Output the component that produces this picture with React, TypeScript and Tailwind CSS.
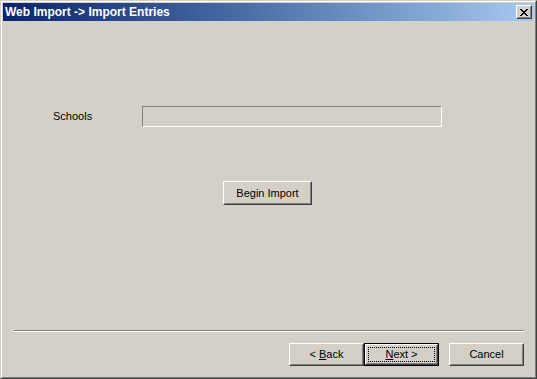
import type { ReactNode } from "react"

const font = { fontFamily: '"Liberation Sans", Arial, sans-serif' }

// pixel pattern for the classic close glyph
const closeRows = [
  "11000011",
  "01100110",
  "00111100",
  "00011000",
  "00111100",
  "01100110",
  "11000011",
]

function Button({
  children,
  isDefault = false,
  className = "",
}: {
  children: ReactNode
  isDefault?: boolean
  className?: string
}) {
  if (isDefault) {
    return (
      <div className={`border border-black ${className}`}>
        <div className="h-full border border-t-white border-l-white border-r-[#404040] border-b-[#404040]">
          <div className="flex h-full items-center justify-center border border-t-[#d4d0c8] border-l-[#d4d0c8] border-r-[#808080] border-b-[#808080] p-px">
            <div className="flex h-full w-full items-center justify-center border border-dotted border-black text-[11px] text-black">
              {children}
            </div>
          </div>
        </div>
      </div>
    )
  }
  return (
    <div
      className={`border border-t-white border-l-white border-r-[#404040] border-b-[#404040] ${className}`}
    >
      <div className="flex h-full items-center justify-center border border-t-[#d4d0c8] border-l-[#d4d0c8] border-r-[#808080] border-b-[#808080] text-[11px] text-black">
        {children}
      </div>
    </div>
  )
}

export default function App() {
  return (
    <div
      className="h-[379px] w-[537px] border border-t-[#d4d0c8] border-l-[#d4d0c8] border-r-[#404040] border-b-[#404040] bg-[#d4d0c8]"
      style={font}
    >
      <div className="flex h-full flex-col border border-t-white border-l-white border-r-[#808080] border-b-[#808080] p-px">
        {/* title bar */}
        <div className="flex h-[18px] shrink-0 items-center justify-between bg-gradient-to-r from-[#0a246a] to-[#a6caf0] pl-[2px] pr-[2px]">
          <span className="text-[12px] font-bold leading-none text-white">
            Web Import -&gt; Import Entries
          </span>
          <div className="h-[14px] w-[16px] border border-t-white border-l-white border-r-[#404040] border-b-[#404040] bg-[#d4d0c8]">
            <div className="flex h-full items-center justify-center border border-t-[#d4d0c8] border-l-[#d4d0c8] border-r-[#808080] border-b-[#808080]">
              <svg width="8" height="7" viewBox="0 0 8 7" shapeRendering="crispEdges">
                {closeRows.map((row, y) =>
                  row
                    .split("")
                    .map((c, x) =>
                      c === "1" ? (
                        <rect key={`${x}-${y}`} x={x} y={y} width="1" height="1" fill="#000" />
                      ) : null,
                    ),
                )}
              </svg>
            </div>
          </div>
        </div>

        {/* body */}
        <div className="flex flex-1 flex-col">
          <div className="ml-[50px] mt-[85px] flex items-center">
            <span className="w-[89px] text-[11px] text-black">Schools</span>
            <div className="h-[21px] w-[300px] border border-t-[#808080] border-l-[#808080] border-r-white border-b-white bg-[#d4d0c8]" />
          </div>

          <Button className="ml-[220px] mt-[54px] h-[24px] w-[89px]">
            Begin Import
          </Button>

          <div className="flex-1" />

          <div className="ml-[11px] w-[510px] border-t border-b border-t-[#808080] border-b-white" />

          <div className="mb-[10px] mt-[11px] flex justify-end pr-[10px]">
            <Button className="h-[23px] w-[75px]">
              &lt; <span className="ml-[3px] underline">B</span>ack
            </Button>
            <Button isDefault className="h-[23px] w-[75px]">
              <span className="underline">N</span>ext &gt;
            </Button>
            <Button className="ml-[10px] h-[23px] w-[75px]">Cancel</Button>
          </div>
        </div>
      </div>
    </div>
  )
}
